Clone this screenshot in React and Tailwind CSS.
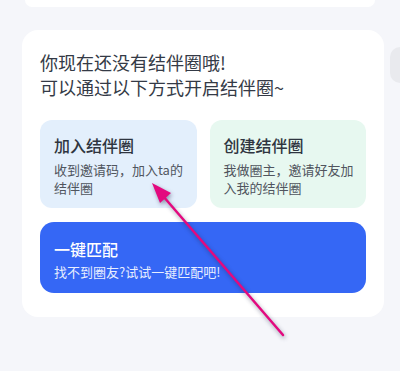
import React from 'react';

const Arrow = () => (
  <svg
    className="absolute left-0 top-0 pointer-events-none"
    width="400"
    height="371"
    viewBox="0 0 400 371"
    style={{ filter: 'drop-shadow(1px 2px 2px rgba(30,30,70,0.45))' }}
  >
    <line x1="283" y1="335" x2="163" y2="196" stroke="#e3097f" strokeWidth="2.5" strokeLinecap="round" />
    <polygon points="152,183 171,193 160,203" fill="#e3097f" />
  </svg>
);

export default function App() {
  return (
    <div
      className="relative h-[371px] w-[400px] overflow-hidden bg-[#f5f6fa]"
      style={{ fontFamily: '"Noto Sans CJK SC", "Noto Sans", sans-serif' }}
    >
      {/* card scrolled off the top */}
      <div className="mx-[25px] h-[7px] rounded-b-[14px] bg-white" />

      <div className="mt-[23px] flex items-start">
        {/* main card */}
        <div className="ml-[22px] w-[362px] shrink-0 rounded-[16px] bg-white px-[18px] pt-[20px] pb-[24px]">
          <div className="text-[18px] leading-[25px] font-normal text-[#343a46]">
            <p>你现在还没有结伴圈哦!</p>
            <p>可以通过以下方式开启结伴圈~</p>
          </div>

          <div className="mt-[20px] grid grid-cols-2 gap-[13px]">
            <div className="h-[88px] rounded-[12px] bg-[#e3effc] pl-[14px] pr-[10px] pt-[14px]">
              <h3 className="text-[16px] leading-[22px] font-medium text-[#2f3540]">加入结伴圈</h3>
              <p className="mt-[5px] text-[13px] leading-[18px] text-[#50555e]">收到邀请码，加入ta的结伴圈</p>
            </div>
            <div className="h-[88px] rounded-[12px] bg-[#e7f8f0] pl-[14px] pr-[8px] pt-[14px]">
              <h3 className="text-[16px] leading-[22px] font-medium text-[#2f3540]">创建结伴圈</h3>
              <p className="mt-[5px] text-[13px] leading-[18px] text-[#50555e]">我做圈主，邀请好友加入我的结伴圈</p>
            </div>
          </div>

          <div className="mt-[14px] h-[71px] rounded-[14px] bg-[#3567f5] pl-[14px] pt-[16px]">
            <h3 className="text-[16px] leading-[22px] font-medium text-white">一键匹配</h3>
            <p className="mt-[3px] text-[13px] leading-[18px] text-[#e8eeff]">找不到圈友?试试一键匹配吧!</p>
          </div>
        </div>

        {/* next card peeking at the edge */}
        <div className="ml-[6px] mt-[17px] h-[36px] w-[20px] shrink-0 rounded-[10px] bg-[#e9eaee]" />
      </div>

      <Arrow />
    </div>
  );
}
